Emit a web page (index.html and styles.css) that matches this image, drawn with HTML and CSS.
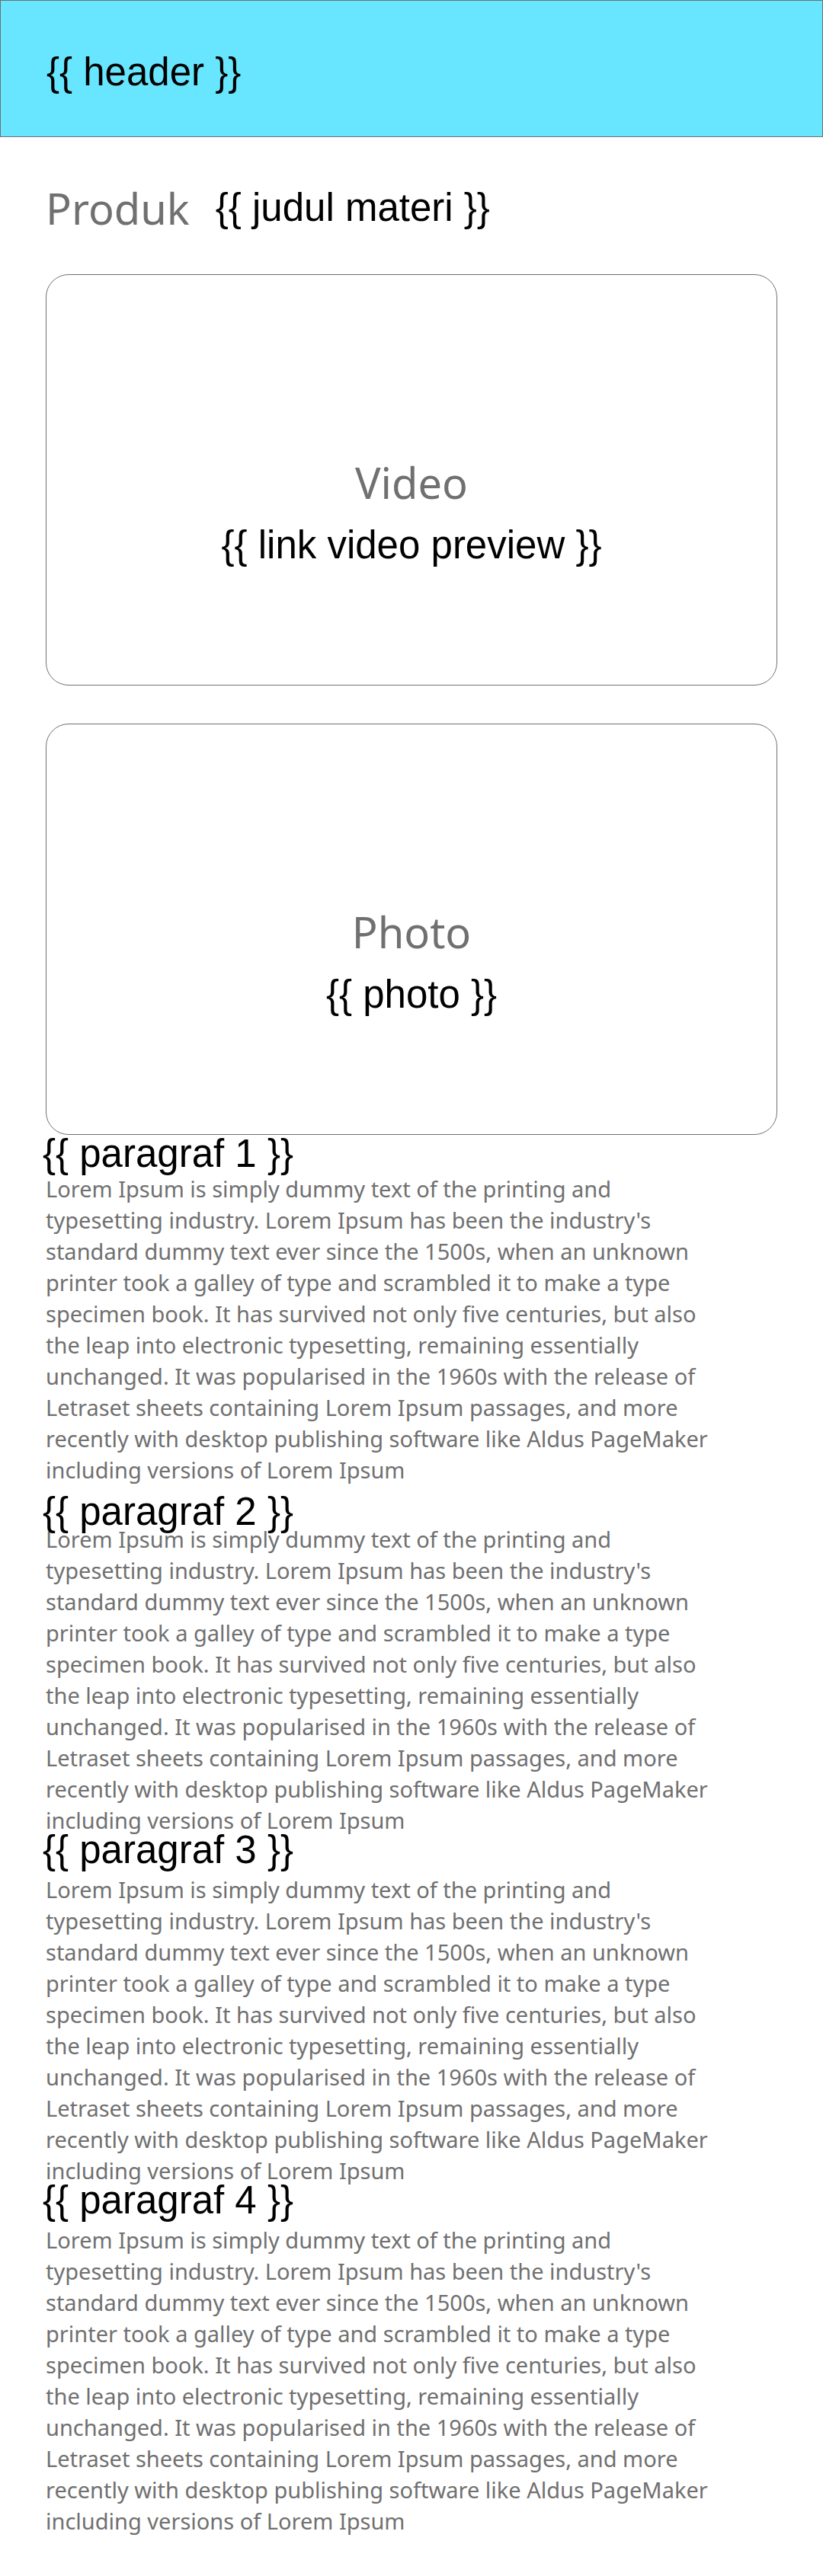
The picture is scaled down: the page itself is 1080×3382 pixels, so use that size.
FILE: index.html
```html
<!DOCTYPE html>
<html lang="id">
<head>
<meta charset="utf-8">
<meta name="viewport" content="width=device-width, initial-scale=1">
<title>Produk</title>
<link rel="stylesheet" href="styles.css">
</head>
<body>
<header class="site-header"><span class="token">{{ header }}</span></header>
<main class="page">
  <div class="title-row">
    <h1 class="heading">Produk</h1>
    <span class="token">{{ judul materi }}</span>
  </div>
  <div class="media-list">
    <section class="media">
      <h2 class="heading">Video</h2>
      <span class="token">{{ link video preview }}</span>
    </section>
    <section class="media">
      <h2 class="heading">Photo</h2>
      <span class="token">{{ photo }}</span>
    </section>
  </div>
  <section class="article">
    <h3 class="token label">{{ paragraf 1 }}</h3>
    <p class="copy">Lorem Ipsum is simply dummy text of the printing and typesetting industry. Lorem Ipsum has been the industry's standard dummy text ever since the 1500s, when an unknown printer took a galley of type and scrambled it to make a type specimen book. It has survived not only five centuries, but also the leap into electronic typesetting, remaining essentially unchanged. It was popularised in the 1960s with the release of Letraset sheets containing Lorem Ipsum passages, and more recently with desktop publishing software like Aldus PageMaker including versions of Lorem Ipsum</p>
  </section>
  <section class="article">
    <h3 class="token label label-low">{{ paragraf 2 }}</h3>
    <p class="copy">Lorem Ipsum is simply dummy text of the printing and typesetting industry. Lorem Ipsum has been the industry's standard dummy text ever since the 1500s, when an unknown printer took a galley of type and scrambled it to make a type specimen book. It has survived not only five centuries, but also the leap into electronic typesetting, remaining essentially unchanged. It was popularised in the 1960s with the release of Letraset sheets containing Lorem Ipsum passages, and more recently with desktop publishing software like Aldus PageMaker including versions of Lorem Ipsum</p>
  </section>
  <section class="article">
    <h3 class="token label label-high">{{ paragraf 3 }}</h3>
    <p class="copy">Lorem Ipsum is simply dummy text of the printing and typesetting industry. Lorem Ipsum has been the industry's standard dummy text ever since the 1500s, when an unknown printer took a galley of type and scrambled it to make a type specimen book. It has survived not only five centuries, but also the leap into electronic typesetting, remaining essentially unchanged. It was popularised in the 1960s with the release of Letraset sheets containing Lorem Ipsum passages, and more recently with desktop publishing software like Aldus PageMaker including versions of Lorem Ipsum</p>
  </section>
  <section class="article">
    <h3 class="token label label-high">{{ paragraf 4 }}</h3>
    <p class="copy">Lorem Ipsum is simply dummy text of the printing and typesetting industry. Lorem Ipsum has been the industry's standard dummy text ever since the 1500s, when an unknown printer took a galley of type and scrambled it to make a type specimen book. It has survived not only five centuries, but also the leap into electronic typesetting, remaining essentially unchanged. It was popularised in the 1960s with the release of Letraset sheets containing Lorem Ipsum passages, and more recently with desktop publishing software like Aldus PageMaker including versions of Lorem Ipsum</p>
  </section>
</main>
</body>
</html>
```
FILE: styles.css
```css
* {
  box-sizing: border-box;
}

body {
  margin: 0;
  background: #fff;
  color: #707070;
  font-family: "Noto Sans", "Open Sans", sans-serif;
}

h1, h2, h3, p {
  margin: 0;
  font-weight: 400;
}

.heading {
  font-size: 56px;
  line-height: 76px;
}

.token {
  color: #000;
  font-family: "Liberation Sans", Arial, sans-serif;
  font-size: 51px;
  line-height: 56px;
}

.site-header {
  display: flex;
  padding: 66px 60px 56px;
  border: 1px solid #707070;
  background: #68e6ff;
}

.page {
  padding: 55px 60px 50px;
}

.title-row {
  display: flex;
  align-items: center;
  gap: 34px;
  margin-bottom: 49px;
}

.media-list {
  display: flex;
  flex-direction: column;
  gap: 50px;
}

.media {
  display: flex;
  flex-direction: column;
  align-items: center;
  gap: 17px;
  min-height: 540px;
  padding: 234px 20px 20px;
  border: 1px solid #707070;
  border-radius: 30px;
}

.article {
  position: relative;
  padding-top: 50px;
}

/* Labels float over the copy, hanging slightly outside the text column. */
.label {
  position: absolute;
  top: 0;
  left: -4px;
  line-height: 50px;
}

.label-low {
  top: 10px;
}

.label-high {
  top: -6px;
}

.copy {
  max-width: 890px;
  font-size: 29px;
  line-height: 41px;
}
```
